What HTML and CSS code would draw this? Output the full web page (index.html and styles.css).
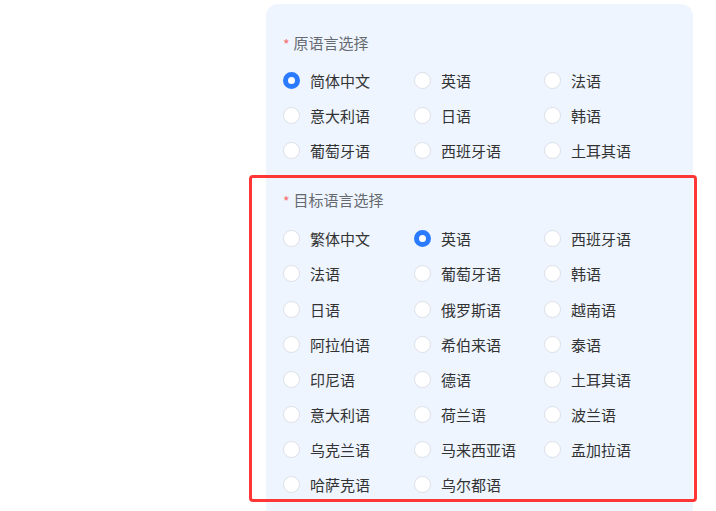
FILE: index.html
```html
<!DOCTYPE html>
<html lang="zh-CN">
<head>
<meta charset="utf-8">
<link rel="stylesheet" href="styles.css">
</head>
<body>
<div class="card">
  <section class="section first">
    <div class="label"><span class="star">*</span>原语言选择</div>
    <div class="grid">
      <label class="opt"><span class="radio checked"></span>简体中文</label>
      <label class="opt"><span class="radio"></span>英语</label>
      <label class="opt"><span class="radio"></span>法语</label>
      <label class="opt"><span class="radio"></span>意大利语</label>
      <label class="opt"><span class="radio"></span>日语</label>
      <label class="opt"><span class="radio"></span>韩语</label>
      <label class="opt"><span class="radio"></span>葡萄牙语</label>
      <label class="opt"><span class="radio"></span>西班牙语</label>
      <label class="opt"><span class="radio"></span>土耳其语</label>
    </div>
  </section>
  <section class="section second">
    <div class="label"><span class="star">*</span>目标语言选择</div>
    <div class="grid">
      <label class="opt"><span class="radio"></span>繁体中文</label>
      <label class="opt"><span class="radio checked"></span>英语</label>
      <label class="opt"><span class="radio"></span>西班牙语</label>
      <label class="opt"><span class="radio"></span>法语</label>
      <label class="opt"><span class="radio"></span>葡萄牙语</label>
      <label class="opt"><span class="radio"></span>韩语</label>
      <label class="opt"><span class="radio"></span>日语</label>
      <label class="opt"><span class="radio"></span>俄罗斯语</label>
      <label class="opt"><span class="radio"></span>越南语</label>
      <label class="opt"><span class="radio"></span>阿拉伯语</label>
      <label class="opt"><span class="radio"></span>希伯来语</label>
      <label class="opt"><span class="radio"></span>泰语</label>
      <label class="opt"><span class="radio"></span>印尼语</label>
      <label class="opt"><span class="radio"></span>德语</label>
      <label class="opt"><span class="radio"></span>土耳其语</label>
      <label class="opt"><span class="radio"></span>意大利语</label>
      <label class="opt"><span class="radio"></span>荷兰语</label>
      <label class="opt"><span class="radio"></span>波兰语</label>
      <label class="opt"><span class="radio"></span>乌克兰语</label>
      <label class="opt"><span class="radio"></span>马来西亚语</label>
      <label class="opt"><span class="radio"></span>孟加拉语</label>
      <label class="opt"><span class="radio"></span>哈萨克语</label>
      <label class="opt"><span class="radio"></span>乌尔都语</label>
    </div>
  </section>
</div>
</body>
</html>
```
FILE: styles.css
```css
html, body {
  margin: 0;
  padding: 0;
  background: #ffffff;
  overflow: hidden;
}
body {
  font-family: "Noto Sans CJK SC", "Noto Sans", sans-serif;
  font-size: 15px;
  color: #333333;
}
.card {
  margin: 4px 0 0 266px;
  width: 427px;
  background: #eef5ff;
  border-radius: 12px 12px 0 0;
  padding-bottom: 40px;
}
.section {
  padding: 0 17px;
  position: relative;
}
.section.first {
  padding-top: 29px;
}
.section.second {
  padding-top: 22px;
}
.section.second .label {
  margin-bottom: 11px;
}
.section.second::after {
  content: "";
  position: absolute;
  left: -17px;
  right: -4px;
  top: 7px;
  bottom: 0;
  border: 3px solid #ff3636;
  border-radius: 4px;
  pointer-events: none;
}
.label {
  height: 20px;
  line-height: 20px;
  color: #666a70;
  margin-bottom: 10px;
  display: flex;
  align-items: center;
}
.star {
  color: #f56c6c;
  margin-right: 4px;
  font-size: 14px;
  position: relative;
  top: 1px;
}
.grid {
  display: grid;
  grid-template-columns: 131px 130px 130px;
  grid-auto-rows: 35.1px;
}
.opt {
  display: flex;
  align-items: center;
  gap: 10px;
  white-space: nowrap;
}
.radio {
  box-sizing: border-box;
  width: 17px;
  height: 17px;
  border-radius: 50%;
  background: #ffffff;
  border: 1px solid #dcdfe6;
  flex: none;
}
.radio.checked {
  border: 5px solid #2a7bff;
}
```
